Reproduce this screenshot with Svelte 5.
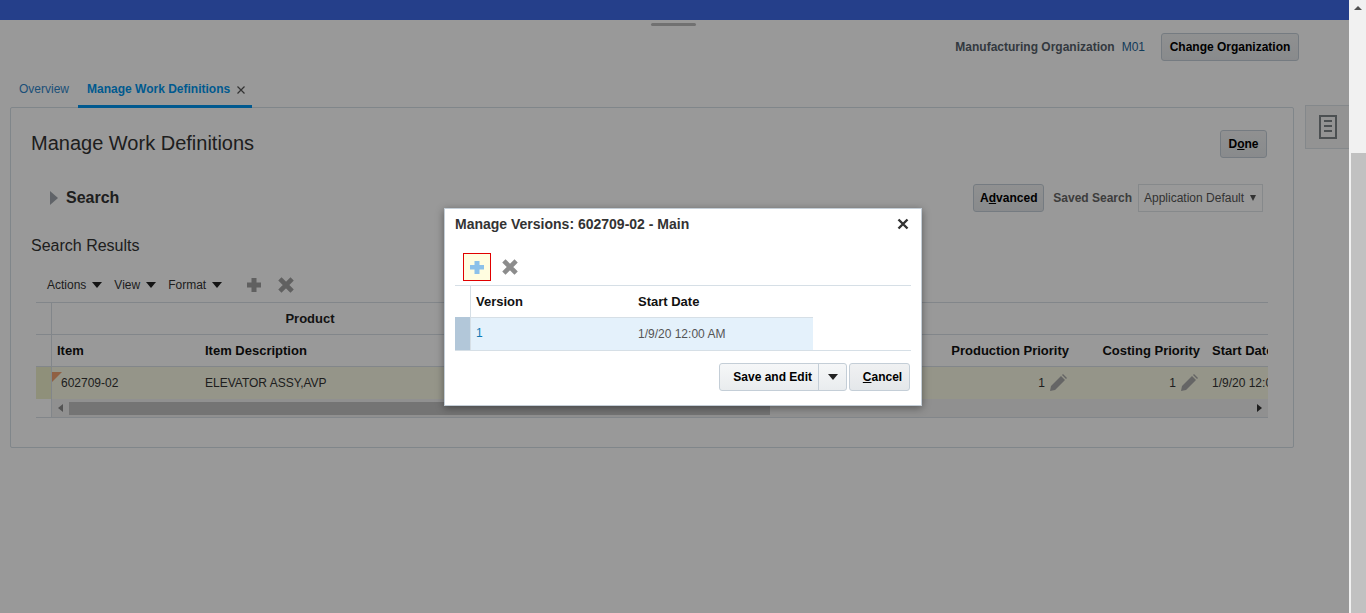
<script>
	const headers = [
		{ label: 'Item', width: 148 },
		{ label: 'Item Description', width: 700 }
	];
</script>

<div class="shell">
	<div class="page">
		<div class="topbar"></div>
		<div class="grip"></div>

		<div class="org-row">
			<span class="org-label">Manufacturing Organization</span>
			<span class="org-value">M01</span>
			<button class="btn org-btn">Change Organization</button>
		</div>

		<div class="work">
			<div class="content">
				<div class="tabs">
					<span class="tab">Overview</span>
					<span class="tab active">Manage Work Definitions
						<svg class="tab-x" width="8" height="8" viewBox="0 0 8 8"><path d="M.5.500l7 7M7.500.500l-7 7" stroke="#333" stroke-width="1.200" /></svg>
					</span>
				</div>

				<div class="panel">
					<div class="panel-head">
						<h1>Manage Work Definitions</h1>
						<button class="btn done">D<u>o</u>ne</button>
					</div>

					<div class="search-row">
						<span class="disclose"></span>
						<span class="search-title">Search</span>
						<span class="spacer"></span>
						<button class="btn advanced">A<u>d</u>vanced</button>
						<span class="saved">Saved Search</span>
						<div class="select">Application Default <i class="select-arrow"></i></div>
					</div>

					<h2>Search Results</h2>

					<div class="toolbar">
						<span class="menu">Actions <i class="caret"></i></span>
						<span class="menu">View <i class="caret"></i></span>
						<span class="menu">Format <i class="caret"></i></span>
						<svg class="tool-add" width="16" height="16" viewBox="0 0 16 16"><path d="M5.500 1h5v4.500H15v5h-4.500V15h-5v-4.500H1v-5h4.500z" fill="#a0a0a0" /></svg>
						<svg class="tool-del" width="16" height="16" viewBox="0 0 16 16"><path d="M3.500 3.500l9 9M12.500 3.500l-9 9" stroke="#a0a0a0" stroke-width="4.600" stroke-linecap="square" /></svg>
					</div>

					<div class="table">
						<div class="group-row">
							<div class="gutter"></div>
							<div class="group-cell">Product</div>
						</div>
						<div class="head-row">
							<div class="gutter"></div>
							{#each headers as h}
								<div class="th" style="width: {h.width}px">{h.label}</div>
							{/each}
							<div class="th right prod">Production Priority</div>
							<div class="th right cost">Costing Priority</div>
							<div class="th start">Start Date</div>
						</div>
						<div class="data-row">
							<div class="gutter tinted"></div>
							<div class="td item"><i class="flag"></i>602709-02</div>
							<div class="td desc">ELEVATOR ASSY,AVP</div>
							<div class="td right prod-v">1
								<svg width="18" height="18" viewBox="0 0 18 18"><path d="M1 17l1-5L12 2l4 4L6 16zM13 1l1-1 4 4-1 1z" fill="#a8a8a8" /></svg>
							</div>
							<div class="td right cost-v">1
								<svg width="18" height="18" viewBox="0 0 18 18"><path d="M1 17l1-5L12 2l4 4L6 16zM13 1l1-1 4 4-1 1z" fill="#a8a8a8" /></svg>
							</div>
							<div class="td start">1/9/20 12:00 AM</div>
						</div>
						<div class="hscroll">
							<div class="gutter"></div>
							<span class="arrow-l"></span>
							<div class="hthumb"></div>
							<span class="arrow-r"></span>
						</div>
					</div>
				</div>
			</div>

			<div class="side-tab">
				<svg width="18" height="24" viewBox="0 0 18 24">
					<rect x="1" y="1" width="16" height="22" fill="none" stroke="#7f8589" stroke-width="2" />
					<path d="M5 6h8M5 11h8M5 16h8" stroke="#7f8589" stroke-width="2" />
				</svg>
			</div>
		</div>

		<div class="overlay"></div>

		<div class="modal">
			<div class="modal-head">
				<span class="modal-title">Manage Versions: 602709-02 - Main</span>
				<svg class="modal-close" width="12" height="12" viewBox="0 0 12 12"><path d="M1.500 1.500l9 9M10.500 1.500l-9 9" stroke="#333" stroke-width="2.400" /></svg>
			</div>
			<div class="modal-tools">
				<div class="focus-add">
					<svg width="16" height="16" viewBox="0 0 16 16"><path d="M5.500 2h5v4h4.500v4.500h-4.500V15h-5v-4.500H1V6h4.500z" fill="#8cc1ea" /></svg>
				</div>
				<svg width="16" height="16" viewBox="0 0 16 16"><path d="M3.500 3.500l9 9M12.500 3.500l-9 9" stroke="#8c8c8c" stroke-width="4.600" stroke-linecap="square" /></svg>
			</div>
			<div class="v-table">
				<div class="v-head">
					<div class="v-gutter"></div>
					<div class="v-th v-col1">Version</div>
					<div class="v-th">Start Date</div>
				</div>
				<div class="v-row">
					<div class="v-gutter selected"></div>
					<div class="v-cells">
						<div class="v-td v-col1 v-link">1</div>
						<div class="v-td">1/9/20 12:00 AM</div>
					</div>
				</div>
			</div>
			<div class="modal-foot">
				<div class="split">
					<span class="split-main">Save and Edit</span>
					<span class="split-arrow"><i class="caret dark"></i></span>
				</div>
				<button class="btn cancel"><u>C</u>ancel</button>
			</div>
		</div>
	</div>

	<div class="vscroll">
		<span class="up"></span>
		<div class="vthumb"></div>
	</div>
</div>

<style>
	:global(body) {
		margin: 0;
		overflow: hidden;
		background: #fff;
	}

	.shell {
		display: flex;
		height: 613px;
		font-family: 'Liberation Sans', Arial, sans-serif;
		font-size: 12px;
		color: #333;
	}

	.page {
		position: relative;
		width: 1349px;
		height: 613px;
		overflow: hidden;
		background: #fff;
	}

	.overlay {
		position: absolute;
		inset: 0;
		background: rgba(0, 0, 0, 0.4);
	}

	.topbar {
		height: 20px;
		background: #3f69e6;
	}

	.grip {
		width: 45px;
		height: 3px;
		margin: 3px auto 0 651px;
		border-radius: 2px;
		background: #bdbdbd;
	}

	.org-row {
		display: flex;
		align-items: center;
		justify-content: flex-end;
		height: 28px;
		margin-top: 7px;
		padding-right: 50px;
		font-weight: bold;
		color: #56606a;
	}

	.org-value {
		margin-left: 7px;
		font-weight: normal;
		color: #1f6496;
	}

	.btn {
		font-family: inherit;
		font-size: 12px;
		font-weight: bold;
		color: #000;
		height: 28px;
		padding: 0;
		background: linear-gradient(#f0f1f2, #e4e7ea);
		border: 1px solid #c4ced7;
		border-radius: 3px;
	}

	.org-btn {
		width: 138px;
		margin-left: 16px;
	}

	.work {
		display: flex;
		align-items: flex-start;
		margin-top: 19px;
	}

	.content {
		width: 1294px;
		flex: none;
	}

	.tabs {
		display: flex;
		height: 28px;
		padding-left: 10px;
		position: relative;
		z-index: 1;
	}

	.tab {
		padding: 2px 9px 0;
		line-height: 14px;
		color: #1a4f78;
	}

	.tab.active {
		height: 23px;
		padding-right: 7px;
		font-weight: bold;
		color: #00598f;
		border-bottom: 3px solid #00598f;
	}

	.tab-x {
		margin-left: 4px;
		vertical-align: -1px;
	}

	.panel {
		box-sizing: border-box;
		height: 341px;
		margin-left: 10px;
		margin-top: -1px;
		padding: 0 26px 0 20px;
		border: 1px solid #d6dfe6;
		border-radius: 2px;
	}

	.panel-head {
		display: flex;
		justify-content: space-between;
		align-items: flex-start;
		padding-top: 22px;
		height: 46px;
	}

	h1 {
		margin: 0;
		font-size: 20px;
		line-height: 26px;
		font-weight: normal;
		color: #333;
	}

	.done {
		width: 47px;
	}

	.search-row {
		display: flex;
		align-items: center;
		height: 28px;
		margin-top: 8px;
	}

	.disclose {
		width: 0;
		height: 0;
		margin-left: 19px;
		border-left: 8px solid #a0a6ad;
		border-top: 7px solid transparent;
		border-bottom: 7px solid transparent;
	}

	.search-title {
		margin-left: 8px;
		font-size: 16px;
		font-weight: bold;
	}

	.spacer {
		flex: 1;
	}

	.advanced {
		width: 71px;
	}

	.saved {
		margin-left: 9px;
		font-weight: bold;
		color: #666;
	}

	.select {
		box-sizing: border-box;
		display: flex;
		align-items: center;
		justify-content: space-between;
		width: 125px;
		height: 28px;
		margin-left: 6px;
		margin-right: 4px;
		padding: 0 6px 0 5px;
		border: 1px solid #dfe4e8;
		color: #555;
	}

	.select-arrow {
		width: 0;
		height: 0;
		border-left: 3.500px solid transparent;
		border-right: 3.500px solid transparent;
		border-top: 6px solid #555;
	}

	h2 {
		margin: 24px 0 0;
		font-size: 16px;
		line-height: 20px;
		font-weight: normal;
		color: #333;
	}

	.toolbar {
		display: flex;
		align-items: center;
		height: 24px;
		margin-top: 17px;
		padding-left: 16px;
		color: #333;
	}

	.menu {
		display: inline-flex;
		align-items: center;
		margin-right: 12px;
	}

	.caret {
		display: inline-block;
		width: 0;
		height: 0;
		margin-left: 6px;
		border-left: 5px solid transparent;
		border-right: 5px solid transparent;
		border-top: 6px solid #222;
	}

	.caret.dark {
		margin: 0;
	}

	.tool-add {
		margin-left: 12px;
	}

	.tool-del {
		margin-left: 16px;
	}

	.table {
		width: 1232px;
		margin-left: 5px;
		overflow: hidden;
		border-top: 1px solid #d9e0e6;
		margin-top: 5px;
	}

	.gutter {
		width: 15px;
		flex: none;
		border-right: 1px solid #d9e0e6;
	}

	.group-row,
	.head-row {
		display: flex;
		height: 31px;
		border-bottom: 1px solid #d9e0e6;
	}

	.group-cell {
		width: 516px;
		text-align: center;
		font-weight: bold;
		font-size: 13px;
		line-height: 32px;
		color: #222;
	}

	.th {
		flex: none;
		box-sizing: border-box;
		padding-left: 5px;
		font-size: 13px;
		font-weight: bold;
		line-height: 31px;
		color: #111;
		white-space: nowrap;
	}

	.th.right {
		padding-left: 0;
	}

	.prod {
		width: 169px;
		text-align: right;
	}

	.cost {
		width: 131px;
		text-align: right;
	}

	.th.start {
		padding-left: 12px;
	}

	.data-row {
		display: flex;
		height: 32px;
		background: #f8f8e4;
		line-height: 32px;
		color: #333;
	}

	.tinted {
		background: #eff0cc;
	}

	.td {
		flex: none;
		box-sizing: border-box;
		white-space: nowrap;
	}

	.item {
		position: relative;
		width: 153px;
		padding-left: 9px;
	}

	.flag {
		position: absolute;
		left: 0;
		top: 5px;
		width: 0;
		height: 0;
		border-top: 10px solid #f0a070;
		border-right: 10px solid transparent;
	}

	.desc {
		width: 695px;
	}

	.td.right {
		display: flex;
		align-items: center;
		justify-content: flex-end;
		gap: 4px;
	}

	.prod-v {
		width: 167px;
	}

	.cost-v {
		width: 131px;
	}

	.td.start {
		padding-left: 14px;
	}

	.hscroll {
		position: relative;
		display: flex;
		align-items: center;
		height: 18px;
		background: #f1f1f1;
		border-bottom: 1px solid #d9e0e6;
	}

	.hscroll .gutter {
		height: 18px;
		background: #fff;
	}

	.arrow-l {
		width: 0;
		height: 0;
		margin-left: 6px;
		border-right: 5px solid #8b8b8b;
		border-top: 4px solid transparent;
		border-bottom: 4px solid transparent;
	}

	.hthumb {
		width: 701px;
		height: 13px;
		margin-left: 6px;
		background: #c1c1c1;
	}

	.arrow-r {
		position: absolute;
		right: 6px;
		width: 0;
		height: 0;
		border-left: 5px solid #333;
		border-top: 4px solid transparent;
		border-bottom: 4px solid transparent;
	}

	.side-tab {
		box-sizing: border-box;
		display: flex;
		align-items: center;
		justify-content: center;
		width: 44px;
		height: 44px;
		margin-left: 11px;
		margin-top: 25px;
		background: #f5f5f5;
		border: 1px solid #dde3e8;
		border-right: 0;
	}

	.modal {
		position: absolute;
		left: 444px;
		top: 208px;
		box-sizing: border-box;
		width: 478px;
		height: 198px;
		padding: 0 10px;
		background: #fff;
		border: 1px solid #c4ced7;
		box-shadow: 0 2px 8px rgba(0, 0, 0, 0.4);
	}

	.modal-head {
		display: flex;
		align-items: center;
		justify-content: space-between;
		height: 30px;
		padding-right: 2px;
	}

	.modal-title {
		font-size: 14px;
		font-weight: bold;
		color: #333;
	}

	.modal-tools {
		display: flex;
		align-items: center;
		gap: 11px;
		height: 28px;
		margin-top: 14px;
		padding-left: 8px;
	}

	.focus-add {
		box-sizing: border-box;
		display: flex;
		align-items: center;
		justify-content: center;
		width: 28px;
		height: 28px;
		background: #fffde0;
		border: 1px solid #e00000;
	}

	.v-table {
		margin-top: 4px;
		border-top: 1px solid #d6dfe6;
		border-bottom: 1px solid #d6dfe6;
	}

	.v-head {
		display: flex;
		height: 31px;
	}

	.v-gutter {
		flex: none;
		width: 15px;
		border-right: 1px solid #d6dfe6;
	}

	.v-gutter.selected {
		background: #b2c7d9;
	}

	.v-th {
		box-sizing: border-box;
		padding-left: 5px;
		font-size: 13px;
		font-weight: bold;
		line-height: 31px;
		color: #111;
	}

	.v-col1 {
		flex: none;
		width: 162px;
	}

	.v-row {
		display: flex;
		height: 33px;
	}

	.v-cells {
		display: flex;
		width: 342px;
		background: #e4f1fb;
		border-top: 1px solid #d6dfe6;
	}

	.v-td {
		box-sizing: border-box;
		padding-left: 5px;
		line-height: 33px;
		color: #555;
	}

	.v-link {
		color: #0f7ab5;
		line-height: 31px;
	}

	.modal-foot {
		display: flex;
		justify-content: flex-end;
		gap: 2px;
		margin-top: 12px;
		padding-right: 1px;
	}

	.split {
		box-sizing: border-box;
		display: flex;
		height: 28px;
		width: 128px;
		background: linear-gradient(#f6f7f8, #e9ecee);
		border: 1px solid #c4ced7;
		border-radius: 3px;
		font-weight: bold;
		color: #000;
		line-height: 26px;
	}

	.split-main {
		width: 99px;
		text-align: right;
		padding-right: 6px;
		box-sizing: border-box;
		border-right: 1px solid #c4ced7;
	}

	.split-arrow {
		display: flex;
		flex: 1;
		align-items: center;
		justify-content: center;
	}

	.cancel {
		width: 61px;
		padding-left: 6px;
	}

	.vscroll {
		position: relative;
		width: 17px;
		height: 613px;
		background: #f1f1f1;
	}

	.up {
		position: absolute;
		left: 5px;
		top: 6px;
		width: 0;
		height: 0;
		border-left: 4px solid transparent;
		border-right: 4px solid transparent;
		border-bottom: 4px solid #505050;
	}

	.vthumb {
		position: absolute;
		left: 2px;
		right: 0;
		top: 153px;
		bottom: 0;
		background: #c1c1c1;
	}
</style>
